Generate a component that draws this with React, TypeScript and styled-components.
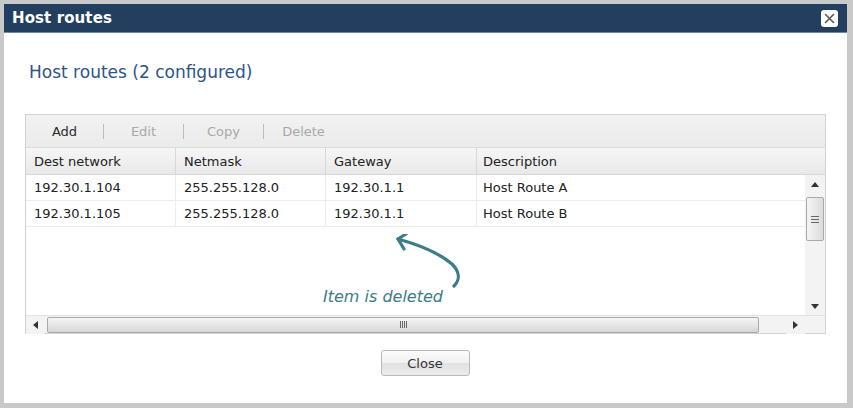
import styled, { createGlobalStyle } from 'styled-components';

const GlobalStyle = createGlobalStyle`
  html, body {
    margin: 0;
    padding: 0;
    background: #ffffff;
  }
  body {
    font-family: 'DejaVu Sans', Verdana, sans-serif;
  }
`;

type Route = {
  dest: string;
  netmask: string;
  gateway: string;
  description: string;
};

const routes: Route[] = [
  { dest: '192.30.1.104', netmask: '255.255.128.0', gateway: '192.30.1.1', description: 'Host Route A' },
  { dest: '192.30.1.105', netmask: '255.255.128.0', gateway: '192.30.1.1', description: 'Host Route B' },
];

const columns = ['Dest network', 'Netmask', 'Gateway', 'Description'];
const toolbarItems = [
  { label: 'Add', enabled: true },
  { label: 'Edit', enabled: false },
  { label: 'Copy', enabled: false },
  { label: 'Delete', enabled: false },
];

function App() {
  return (
    <>
      <GlobalStyle />
      <Frame>
        <TitleBar>
          <Title>Host routes</Title>
          <CloseIcon aria-label="close">
            <svg width="13" height="13" viewBox="0 0 13 13">
              <path d="M2.5 2.5 L10.5 10.5 M10.5 2.5 L2.5 10.5" stroke="#555" strokeWidth="1.6" strokeLinecap="round" />
            </svg>
          </CloseIcon>
        </TitleBar>

        <Body>
          <Heading>Host routes (2 configured)</Heading>

          <Panel>
            <Toolbar>
              {toolbarItems.map((item, i) => (
                <ToolbarGroup key={item.label}>
                  {i > 0 && <ToolbarSeparator />}
                  <ToolButton $enabled={item.enabled} $first={i === 0}>
                    {item.label}
                  </ToolButton>
                </ToolbarGroup>
              ))}
            </Toolbar>

            <HeaderRow>
              {columns.map((c) => (
                <HeaderCell key={c}>{c}</HeaderCell>
              ))}
            </HeaderRow>

            <GridBody>
              <Rows>
                {routes.map((r) => (
                  <Row key={r.dest}>
                    <Cell>{r.dest}</Cell>
                    <Cell>{r.netmask}</Cell>
                    <Cell>{r.gateway}</Cell>
                    <Cell>{r.description}</Cell>
                  </Row>
                ))}
                <Annotation>
                  <svg width="80" height="62" viewBox="0 0 80 62">
                    <path
                      d="M4 5 C 22 10, 44 18, 58 30 C 66 38, 66 46, 60 52"
                      fill="none"
                      stroke="#3a7c88"
                      strokeWidth="3.2"
                      strokeLinecap="round"
                    />
                    <path
                      d="M12 0 L4 5 L10 15"
                      fill="none"
                      stroke="#3a7c88"
                      strokeWidth="3.2"
                      strokeLinecap="round"
                      strokeLinejoin="round"
                    />
                  </svg>
                  <AnnotationText>Item is deleted</AnnotationText>
                </Annotation>
              </Rows>

              <VScroll>
                <ScrollButton>
                  <svg width="8" height="5" viewBox="0 0 8 5">
                    <path d="M0 5 L4 0 L8 5 Z" fill="#333" />
                  </svg>
                </ScrollButton>
                <VTrack>
                  <VThumb>
                    <Grip $vertical />
                  </VThumb>
                </VTrack>
                <ScrollButton>
                  <svg width="8" height="5" viewBox="0 0 8 5">
                    <path d="M0 0 L8 0 L4 5 Z" fill="#333" />
                  </svg>
                </ScrollButton>
              </VScroll>

              <HScroll>
                <ScrollButton>
                  <svg width="5" height="8" viewBox="0 0 5 8">
                    <path d="M5 0 L5 8 L0 4 Z" fill="#333" />
                  </svg>
                </ScrollButton>
                <HTrack>
                  <HThumb>
                    <Grip />
                  </HThumb>
                </HTrack>
                <ScrollButton>
                  <svg width="5" height="8" viewBox="0 0 5 8">
                    <path d="M0 0 L5 4 L0 8 Z" fill="#333" />
                  </svg>
                </ScrollButton>
              </HScroll>

              <Corner />
            </GridBody>
          </Panel>

          <Footer>
            <CloseButton>Close</CloseButton>
          </Footer>
        </Body>
      </Frame>
    </>
  );
}

export default App;

const Frame = styled.div`
  box-sizing: border-box;
  width: 853px;
  height: 408px;
  border-style: solid;
  border-color: #c9c9c9;
  border-width: 4px 6px 5px 4px;
  display: flex;
  flex-direction: column;
  background: #ffffff;
`;

const TitleBar = styled.div`
  height: 28px;
  flex: none;
  background: #233f60;
  border-bottom: 1px solid #6f87a3;
  display: flex;
  align-items: center;
  justify-content: space-between;
  padding: 0 9px 0 8px;
`;

const Title = styled.span`
  color: #ffffff;
  font-weight: bold;
  font-size: 15px;
  letter-spacing: 0.1px;
`;

const CloseIcon = styled.span`
  width: 17px;
  height: 17px;
  border-radius: 3px;
  background: #ffffff;
  display: flex;
  align-items: center;
  justify-content: center;
`;

const Body = styled.div`
  flex: 1;
  padding: 0 20px 0 21px;
  display: flex;
  flex-direction: column;
`;

const Heading = styled.h1`
  margin: 29px 0 0 4px;
  font-size: 17px;
  line-height: 20px;
  font-weight: normal;
  color: #2f5488;
`;

const Panel = styled.div`
  margin-top: 32px;
  width: 801px;
  box-sizing: border-box;
  border: 1px solid #d3d3d3;
  font-size: 13px;
  color: #222;
`;

const Toolbar = styled.div`
  height: 32px;
  display: flex;
  align-items: center;
  background: linear-gradient(#f2f2f2, #ebebeb);
  border-bottom: 1px solid #dcdcdc;
`;

const ToolbarGroup = styled.div`
  display: flex;
  align-items: center;
`;

const ToolbarSeparator = styled.span`
  width: 1px;
  height: 15px;
  background: #bdbdbd;
`;

const ToolButton = styled.span<{ $enabled: boolean; $first: boolean }>`
  width: ${(p) => (p.$first ? '77px' : '79px')};
  text-align: center;
  color: ${(p) => (p.$enabled ? '#2b2b2b' : '#a8a8a8')};
`;

const HeaderRow = styled.div`
  height: 26px;
  display: grid;
  grid-template-columns: 150px 150px 151px 1fr;
  background: linear-gradient(#f6f6f6, #e9e9e9);
  border-bottom: 1px solid #d6d6d6;
`;

const HeaderCell = styled.div`
  display: flex;
  align-items: center;
  padding-left: 8px;
  border-right: 1px solid #d8d8d8;
  &:last-child {
    border-right: none;
    padding-left: 6px;
  }
`;

const GridBody = styled.div`
  display: grid;
  grid-template-columns: 1fr 20px;
  grid-template-rows: 140px 18px;
`;

const Rows = styled.div`
  position: relative;
  overflow: hidden;
`;

const Row = styled.div`
  height: 25px;
  display: grid;
  grid-template-columns: 150px 150px 151px 1fr;
  border-bottom: 1px solid #ececec;
`;

const Cell = styled.div`
  display: flex;
  align-items: center;
  padding-left: 8px;
  border-right: 1px solid #ececec;
  &:last-child {
    border-right: none;
    padding-left: 6px;
  }
`;

const Annotation = styled.div`
  position: absolute;
  left: 296px;
  top: 57px;
  width: 160px;
  height: 80px;
  svg {
    position: absolute;
    left: 72px;
    top: 2px;
  }
`;

const AnnotationText = styled.span`
  position: absolute;
  left: 1px;
  top: 55px;
  font-family: 'DejaVu Sans', sans-serif;
  font-style: italic;
  font-size: 16px;
  color: #3a7c88;
  white-space: nowrap;
`;

const VScroll = styled.div`
  display: flex;
  flex-direction: column;
  background: #f3f3f3;
`;

const ScrollButton = styled.div`
  flex: none;
  width: 19px;
  height: 18px;
  display: flex;
  align-items: center;
  justify-content: center;
  background: #f3f3f3;
`;

const VTrack = styled.div`
  flex: 1;
  padding: 4px 1px 0 1px;
`;

const VThumb = styled.div`
  height: 44px;
  box-sizing: border-box;
  border: 1px solid #a9a9a9;
  border-radius: 2px;
  background: linear-gradient(90deg, #f4f4f4, #dcdcdc);
  display: flex;
  align-items: center;
  justify-content: center;
`;

const HScroll = styled.div`
  display: flex;
  align-items: center;
  background: #f3f3f3;
  border-top: 1px solid #e2e2e2;
`;

const HTrack = styled.div`
  flex: 1;
  display: flex;
  align-items: center;
  height: 100%;
  padding-left: 2px;
`;

const HThumb = styled.div`
  width: 712px;
  height: 16px;
  box-sizing: border-box;
  border: 1px solid #a9a9a9;
  border-radius: 2px;
  background: linear-gradient(#f6f6f6, #d6d6d6);
  display: flex;
  align-items: center;
  justify-content: center;
`;

const Grip = styled.span<{ $vertical?: boolean }>`
  width: ${(p) => (p.$vertical ? '8px' : '7px')};
  height: 7px;
  background: ${(p) =>
    p.$vertical
      ? 'repeating-linear-gradient(#666 0 1px, transparent 1px 3px)'
      : 'repeating-linear-gradient(90deg, #666 0 1px, transparent 1px 2px)'};
`;

const Corner = styled.div`
  background: #f3f3f3;
  border-top: 1px solid #e2e2e2;
`;

const Footer = styled.div`
  display: flex;
  justify-content: center;
  margin-top: 16px;
  padding-right: 2px;
`;

const CloseButton = styled.button`
  width: 89px;
  height: 26px;
  border: 1px solid #b9b9b9;
  border-radius: 3px;
  background: linear-gradient(#fbfbfb 0%, #f1f1f1 50%, #e1e1e1 51%, #ececec 100%);
  font-family: 'DejaVu Sans', Verdana, sans-serif;
  font-size: 13px;
  color: #333;
  padding: 0;
`;
